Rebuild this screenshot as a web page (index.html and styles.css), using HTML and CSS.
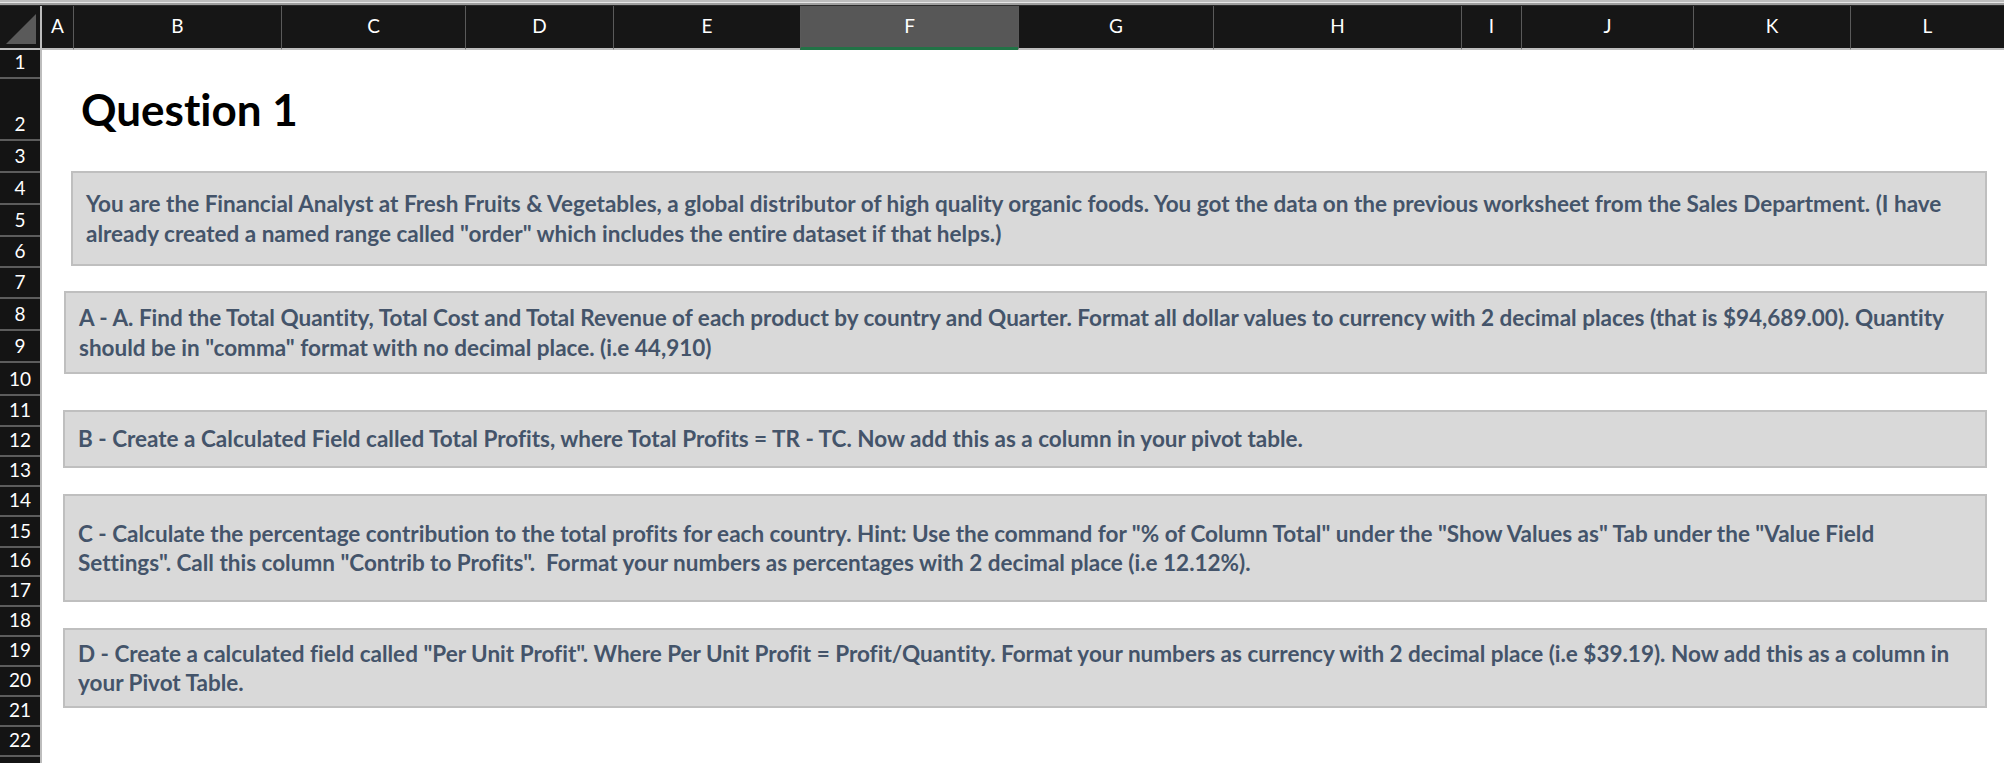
FILE: index.html
```html
<!DOCTYPE html>
<html lang="en">
<head>
    <meta charset="UTF-8">
    <title>Question 1</title>
    <link rel="stylesheet" href="styles.css">
</head>
<body>
    <div class="topstrip"></div>
    <div class="colhead">
        <div class="corner">
            <svg width="40" height="42" viewBox="0 0 40 42"><polygon points="6,38 36,38 36,8" fill="#5a5a5a"/></svg>
        </div>
        <div class="col col-a">A</div>
        <div class="col col-b">B</div>
        <div class="col col-c">C</div>
        <div class="col col-d">D</div>
        <div class="col col-e">E</div>
        <div class="col col-f">F</div>
        <div class="col col-g">G</div>
        <div class="col col-h">H</div>
        <div class="col col-i">I</div>
        <div class="col col-j">J</div>
        <div class="col col-k">K</div>
        <div class="col col-l">L</div>
    </div>
    <div class="sheet">
        <div class="rowhead">
            <div class="rn h29">1</div>
            <div class="rn h62">2</div>
            <div class="rn h32">3</div>
            <div class="rn h32">4</div>
            <div class="rn h32">5</div>
            <div class="rn h31">6</div>
            <div class="rn h31">7</div>
            <div class="rn h32">8</div>
            <div class="rn h32">9</div>
            <div class="rn h33">10</div>
            <div class="rn h31">11</div>
            <div class="rn h30">12</div>
            <div class="rn h30">13</div>
            <div class="rn h30">14</div>
            <div class="rn h31">15</div>
            <div class="rn h29">16</div>
            <div class="rn h30">17</div>
            <div class="rn h30">18</div>
            <div class="rn h30">19</div>
            <div class="rn h30">20</div>
            <div class="rn h30">21</div>
            <div class="rn h30">22</div>
        </div>
        <div class="canvas">
            <h1 class="title">Question 1</h1>
            <div class="note note-intro">
                You are the Financial Analyst at Fresh Fruits &amp; Vegetables, a global distributor of high quality organic foods. You got the data on the previous worksheet from the Sales Department. (I have<br>
                already created a named range called "order" which includes the entire dataset if that helps.)
            </div>
            <div class="note note-a">
                A - A. Find the Total Quantity, Total Cost and Total Revenue of each product by country and Quarter. Format all dollar values to currency with 2 decimal places (that is $94,689.00). Quantity<br>
                should be in "comma" format with no decimal place. (i.e 44,910)
            </div>
            <div class="note note-b">
                B - Create a Calculated Field called Total Profits, where Total Profits = TR - TC. Now add this as a column in your pivot table.
            </div>
            <div class="note note-c">
                C - Calculate the percentage contribution to the total profits for each country. Hint: Use the command for "% of Column Total" under the "Show Values as" Tab under the "Value Field<br>
                Settings". Call this column "Contrib to Profits".&nbsp; Format your numbers as percentages with 2 decimal place (i.e 12.12%).
            </div>
            <div class="note note-d">
                D - Create a calculated field called "Per Unit Profit". Where Per Unit Profit = Profit/Quantity. Format your numbers as currency with 2 decimal place (i.e $39.19). Now add this as a column in<br>
                your Pivot Table.
            </div>
        </div>
    </div>
</body>
</html>
```

FILE: styles.css
```css
*{
    margin: 0;
    padding: 0;
    box-sizing: border-box;
}
body{
    width: 2004px;
    height: 763px;
    overflow: hidden;
    background: #fff;
    font-family: Lato, "Open Sans", sans-serif;
    font-variant-ligatures: none;
}
.topstrip{
    height: 6px;
    background: linear-gradient(#bdbdbd 0, #bdbdbd 2px, #e6e6e6 2px, #e6e6e6 3px, #9e9e9e 3px, #9e9e9e 5px, #2a2a2a 5px);
}
.colhead{
    display: flex;
    height: 44px;
    background: #161616;
}
.corner{
    width: 42px;
    height: 44px;
    border-right: 2px solid #bdbdbd;
    border-bottom: 2px solid #bdbdbd;
}
.corner svg{
    display: block;
}
.col{
    height: 44px;
    border-left: 1px solid #5a5a5a;
    border-bottom: 2px solid #bdbdbd;
    color: #fff;
    font-size: 19px;
    text-align: center;
    line-height: 40px;
}
.col-a{ width: 31px; border-left: none; }
.col-b{ width: 208px; }
.col-c{ width: 184px; }
.col-d{ width: 148px; }
.col-e{ width: 187px; }
.col-f{
    width: 218px;
    background: #575757;
    border-bottom: 3px solid #217346;
}
.col-g{ width: 195px; }
.col-h{ width: 248px; }
.col-i{ width: 60px; }
.col-j{ width: 172px; }
.col-k{ width: 157px; }
.col-l{ flex: 1; }

.sheet{
    display: flex;
}
.rowhead{
    width: 42px;
    height: 713px;
    background: #141414;
    border-right: 2px solid #bdbdbd;
}
.rn{
    display: flex;
    align-items: flex-end;
    justify-content: center;
    padding-bottom: 3px;
    border-bottom: 2px solid #5c5c5c;
    color: #fff;
    font-size: 19px;
    line-height: 24px;
}
.h29{ height: 29px; }
.h30{ height: 30px; }
.h31{ height: 31px; }
.h32{ height: 32px; }
.h33{ height: 33px; }
.h62{ height: 62px; }

.canvas{
    flex: 1;
}
.title{
    margin: 35px 0 0 39px;
    font-size: 44px;
    line-height: 48px;
    font-weight: 700;
    color: #000;
}
.note{
    display: flex;
    flex-direction: column;
    justify-content: center;
    margin-left: 21px;
    width: 1924px;
    padding: 0 13px;
    background: #d9d9d9;
    border: 2px solid #bfbfbf;
    color: #44546a;
    font-size: 22.5px;
    font-weight: 700;
    line-height: 29.5px;
    white-space: nowrap;
}
.note-intro{
    margin-top: 38px;
    margin-left: 29px;
    width: 1916px;
    height: 95px;
}
.note-a{
    margin-top: 25px;
    margin-left: 22px;
    width: 1923px;
    height: 83px;
}
.note-b{
    margin-top: 36px;
    height: 58px;
}
.note-c{
    margin-top: 26px;
    height: 108px;
}
.note-d{
    margin-top: 26px;
    height: 80px;
}
```
